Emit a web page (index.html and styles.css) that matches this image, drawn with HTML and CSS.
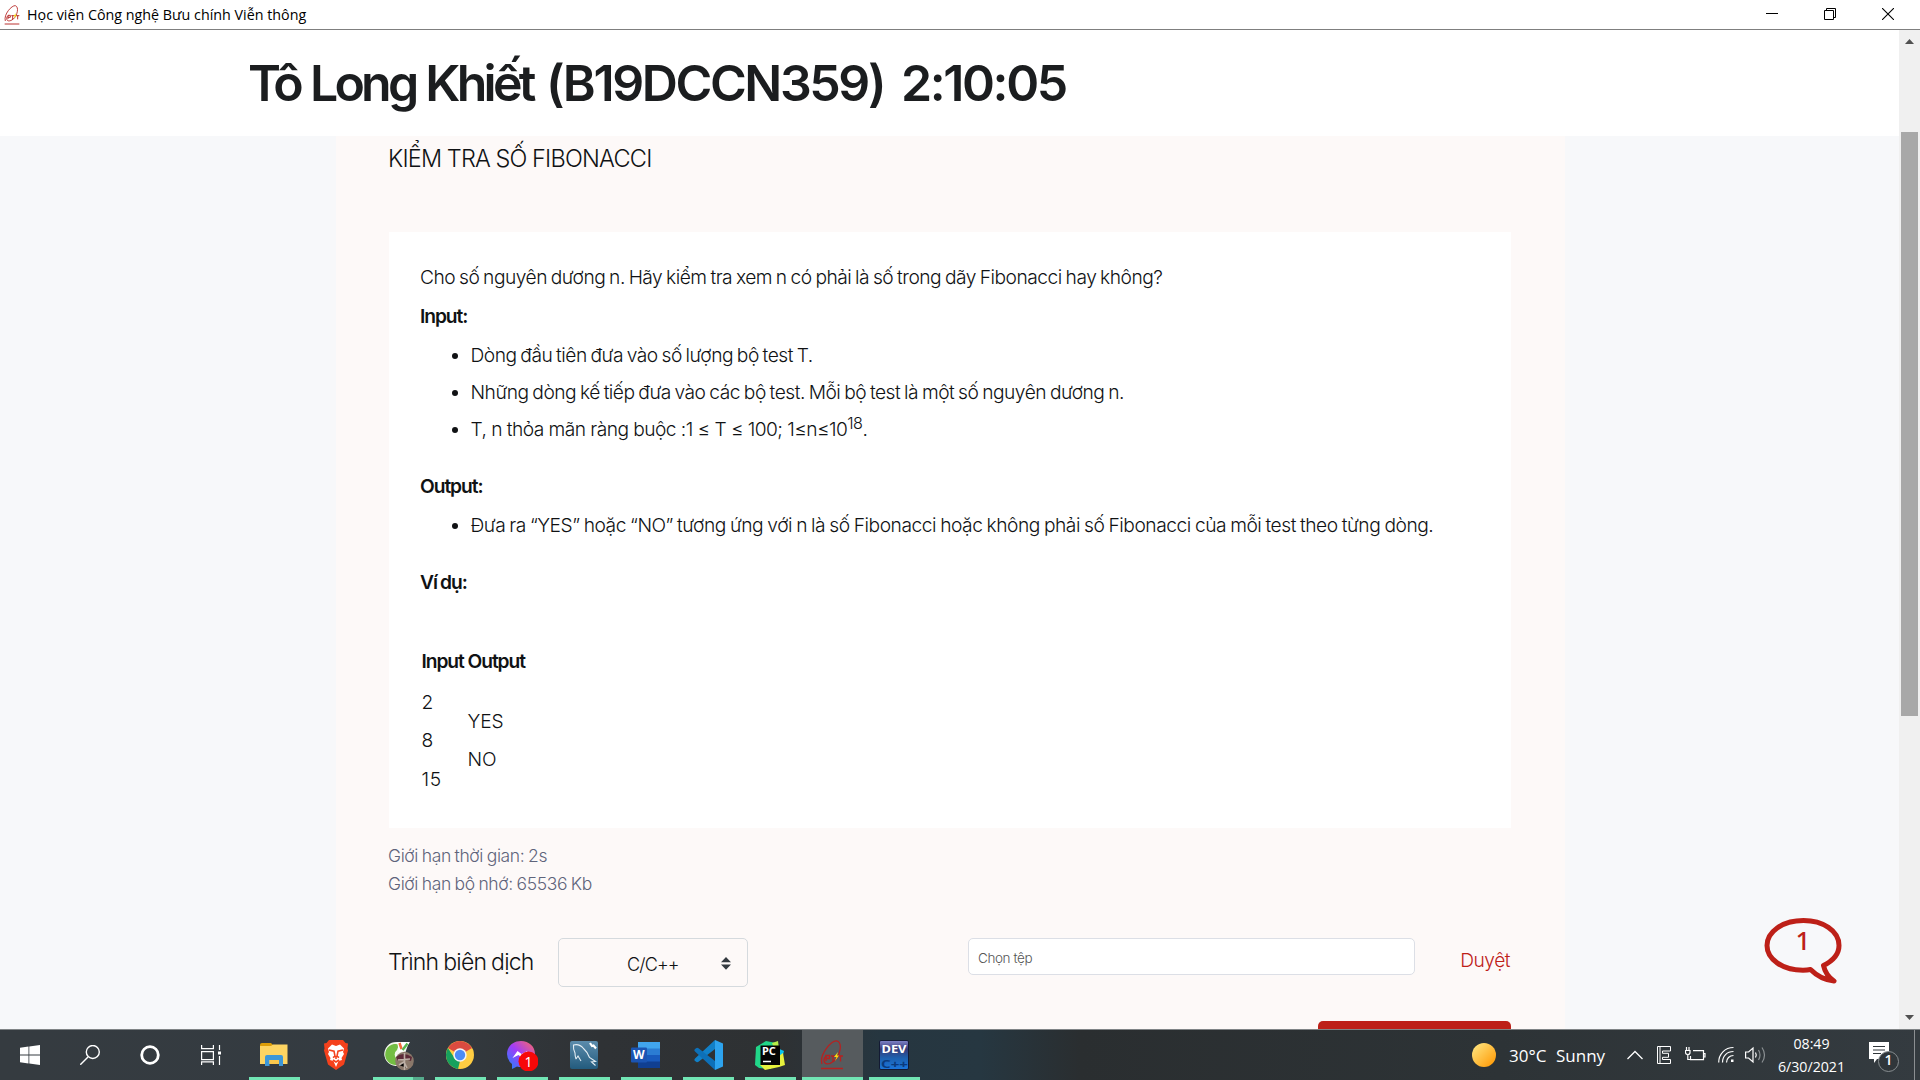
FILE: index.html
```html
<!DOCTYPE html>
<html lang="vi">
<head>
<meta charset="utf-8">
<title>Học viện Công nghệ Bưu chính Viễn thông</title>
<link rel="stylesheet" href="styles.css">
</head>
<body>
<div class="titlebar">
  <svg class="app-logo" width="16" height="24" viewBox="0 0 24 30"><use href="#ptit"/></svg>
  <span class="app-title">Học viện Công nghệ Bưu chính Viễn thông</span>
  <div class="window-controls">
    <svg width="12" height="12"><path d="M0 5.500h12" stroke="#000"/></svg>
    <svg width="12" height="12" fill="none" stroke="#000"><path d="M.5 2.500h9v9h-9zM2.500 2V.5h9v9H10"/></svg>
    <svg width="12" height="12"><path d="M0 0l12 12M12 0L0 12" stroke="#000" stroke-width="1.100"/></svg>
  </div>
</div>

<div class="viewport">
  <div class="page">
    <header class="header"><h1><span class="name">Tô Long Khiết</span><span class="code">(B19DCCN359)</span><span class="timer">2:10:05</span></h1></header>
    <main class="content">
      <h2 class="problem-title">KIỂM TRA SỐ FIBONACCI</h2>
      <section class="card">
        <p>Cho số nguyên dương n. Hãy kiểm tra xem n có phải là số trong dãy Fibonacci hay không?</p>
        <p class="label">Input:</p>
        <ul>
          <li>Dòng đầu tiên đưa vào số lượng bộ test T.</li>
          <li>Những dòng kế tiếp đưa vào các bộ test. Mỗi bộ test là một số nguyên dương n.</li>
          <li class="bounds">T, n thỏa mãn ràng buộc :1 ≤ T ≤ 100; 1≤n≤10<sup>18</sup>.</li>
        </ul>
        <p class="label">Output:</p>
        <ul>
          <li class="result">Đưa ra “YES” hoặc “NO” tương ứng với n là số Fibonacci hoặc không phải số Fibonacci của mỗi test theo từng dòng.</li>
        </ul>
        <p class="label">Ví dụ:</p>
        <div class="example">
          <b>Input</b><b>Output</b>
          <div>2<br>8<br>15</div>
          <div>YES<br>NO</div>
        </div>
      </section>
      <div class="limits">
        <div>Giới hạn thời gian: 2s</div>
        <div>Giới hạn bộ nhớ: 65536 Kb</div>
      </div>
      <div class="submit-row">
        <label>Trình biên dịch</label>
        <div class="select"><span>C/C++</span><svg width="10" height="13"><path d="M0 5.300L5 0l5 5.300zM0 7.500h10l-5 5.300z" fill="#343a40"/></svg></div>
        <div class="file">Chọn tệp</div>
        <a class="browse">Duyệt</a>
      </div>
      <div class="submit-button"></div>
    </main>
    <div class="chat">
      <svg width="80" height="70"><path d="M40.500 4.500C59.500 4.500 76 14.500 76 29.500c0 8.500-5.500 15-15.500 20 1.500 7 4.500 11.500 10.500 15.500C61 64 53.500 59.500 47.500 53.500c-3 .7-5.500.7-7.500.7C19 54 4 43 4 29.500S19 4.500 40.500 4.500z" fill="none" stroke="#bd2018" stroke-width="5" stroke-linejoin="round"/></svg>
      <span>1</span>
    </div>
  </div>
  <div class="scrollbar">
    <svg width="9" height="5"><path d="M0 5L4.500 0 9 5z" fill="#505050"/></svg>
    <div class="thumb"></div>
    <svg class="down" width="9" height="5"><path d="M0 0l4.500 5L9 0z" fill="#505050"/></svg>
  </div>
</div>

<footer class="taskbar">
  <div class="system">
    <svg width="20" height="20"><path d="M0 2.800L8.500 1.600v8H0zM9.300 1.400L20 0v9.600H9.300zM0 10.400h8.500v8L0 17.200zM9.300 10.400H20V20L9.300 18.600z" fill="#fff"/></svg>
    <svg width="20" height="20" fill="none" stroke="#fff" stroke-width="1.400"><circle cx="12.800" cy="7" r="6.500"/><path d="M8 12L.3 19.700"/></svg>
    <svg width="20" height="20"><circle cx="10" cy="10" r="8.300" fill="none" stroke="#fff" stroke-width="2.800"/></svg>
    <svg width="22" height="20" fill="none" stroke="#fff" stroke-width="1.200"><path d="M1.600 0v3.600h11.800V0M1.600 6.600h11.800v8H1.600zM1.600 20v-3.100h11.800V20M19.500 0v5M19.500 11v9"/><path fill="#fff" stroke="none" d="M18 6.500h3v3h-3z"/></svg>
  </div>
  <div class="apps">
    <div class="app open"><svg width="30" height="30"><path d="M1 5q0-2 2-2h9l2 2v8H1z" fill="#dc9d08"/><path d="M1 6h11l2-1.500h14.500V24H1z" fill="#fdd462"/><path d="M6 25V17q0-2 2-2h14q2 0 2 2v9h-4v-6h-9.500v6H6z" fill="#3d97d8"/><path d="M10.500 20H20v4h-9.500z" fill="#fbc84c"/></svg></div>
    <div class="app"><svg width="30" height="30"><path d="M8 0h14l2.500 3 2.500.5-.5 5 .5 2-4 14L15 30l-8-5.500-4-14 .5-2-.5-5L5.500 3z" fill="#f5411c"/><path d="M15 6l4-1.500 4 4-1 3.500 1 2-2.500 4 .5 2-3.500 1L15 27l-2.500-6-3.500-1 .5-2L7 14l1-2-1-3.500 4-4z" fill="#fff"/><path d="M8 10l5 1.200 1 5-2 1.500M22 10l-5 1.200-1 5 2 1.500M12 20l3 2 3-2M15 16v3" fill="none" stroke="#f5411c" stroke-width="1.600"/></svg></div>
    <div class="app open split"><svg width="32" height="32"><path d="M15 3A12 12 0 1 0 19 26L27 3z" fill="#f4f7ee"/><path d="M17 5.500A10.500 10.500 0 1 0 18 25L15 20A5.500 5.500 0 0 1 15 11z" fill="#73bd43"/><path d="M15 3h13l-6 9-5 1z" fill="#fff"/><path d="M17.500 4l2 6" stroke="#f26b3b" stroke-width="2.500"/><path d="M25.500 4.500l-5 6.500" stroke="#57b54c" stroke-width="2.500"/><circle cx="22.500" cy="22" r="9.300" fill="#8a786a"/><path d="M14 18q7-6 16 0l-1 4-6-2-7 2z" fill="#5c2a38"/><path d="M22.500 14v17M16 21l12-1M17 26l5-3 3 6" stroke="#bdb0a6" stroke-width="1.600"/></svg></div>
    <div class="app open"><svg width="30" height="30"><circle cx="15" cy="15" r="14" fill="#ffcd42"/><path d="M15 15L2.900 8A14 14 0 0 1 27.100 8z" fill="#da4b40"/><path d="M2.900 8l6.600 10 5.500 3-2 7.900A14 14 0 0 1 2.900 8z" fill="#17a15d"/><circle cx="15" cy="15" r="6.700" fill="#f4f4f4"/><circle cx="15" cy="15" r="5.200" fill="#4c8bf5"/></svg></div>
    <div class="app open"><svg width="32" height="32"><defs><linearGradient id="ms" x1="0" y1="1" x2="1" y2="0"><stop offset="0" stop-color="#168aff"/><stop offset=".5" stop-color="#a13cf8"/><stop offset="1" stop-color="#ff6c60"/></linearGradient></defs><path d="M15 2C7 2 1 7.500 1 15q0 6 5 10v5l5-2.500q2 .5 4 .5c8 0 14-5.500 14-13S23 2 15 2z" fill="url(#ms)"/><path d="M6.500 19l5-7 4 3 6-3-5 7-4-3z" fill="#fff"/><circle cx="22.500" cy="22.500" r="10" fill="#f70808"/></svg><span class="badge">1</span></div>
    <div class="app open"><svg width="30" height="30"><defs><linearGradient id="my" x2="0" y2="1"><stop stop-color="#5c8cac"/><stop offset="1" stop-color="#235b7d"/></linearGradient></defs><rect x="1" y="1" width="28" height="28" rx="2" fill="url(#my)"/><path d="M7 19q-1-3-1-6-2-4-1.500-8 6-1.500 10 3.500 4 3.500 6 9l6 4-4 .5 4 3.500M7 19l2-3 3 5" fill="none" stroke="#e3edf3" stroke-width="1.100"/><path d="M21 3l2 3 1.500-.5 2.500 3" fill="none" stroke="#fff" stroke-width="2.200"/></svg></div>
    <div class="app open"><svg width="30" height="30"><path d="M7 2h22v7H7z" fill="#41a5ee"/><path d="M7 8.500h22v7H7z" fill="#2b7cd3"/><path d="M7 15h22v7H7z" fill="#185abd"/><path d="M7 21.500h22V28H7z" fill="#103f91"/><rect y="7.500" width="16" height="15" rx="1" fill="#1b55b3"/><text x="2" y="19" class="glyph" font-size="12">W</text></svg></div>
    <div class="app open"><svg width="30" height="30"><path d="M22 0l-20 18.500q-1.500 1.500 0 2.500l1.500 1q1 .5 2-.3L22 9z" fill="#1180c8"/><path d="M22 30L2 11.500Q.5 10 2 9l1.500-1q1-.5 2 .3L22 21z" fill="#0d70b8"/><path d="M22 0l8 3.500v23L22 30z" fill="#2da3ee"/></svg></div>
    <div class="app open"><svg width="30" height="30"><path d="M1 7L11 1l10 2-5 26-12-1L0 25z" fill="#21d789"/><path d="M17 3l6-2 1 8-4 2z" fill="#b8ef48"/><path d="M20 7l9 4-2 7z" fill="#07c3f2"/><path d="M24 16l4-3 2 12-6 2-14 3-5-5z" fill="#e8f23d"/><rect x="5.500" y="5.500" width="19.500" height="19.500" fill="#050505"/><path d="M8 21.500h8" stroke="#fff" stroke-width="1.500"/><text x="7" y="15" class="glyph" font-size="11">PC</text></svg></div>
    <div class="app open active"><svg width="24" height="30" viewBox="0 0 24 30"><g id="ptit"><path d="M2 24C-1 14 12 0 17 1c6 2 3 15-3 20-5 4-10 4-10-1 0-2 1-3 2-4" fill="none" stroke="#b52221" stroke-width="1.300"/><path d="M6 21v-5.500h3.500v3H6M11 16h5M13 16v6M17 16h6M20.500 16v5.500M1 28.500h22" fill="none" stroke="#b52221" stroke-width="1.400"/><path d="M18 12l-4 5h2.500l-1.500 4 4-5.500h-2z" fill="#f4df16"/></g></svg></div>
    <div class="app open"><svg width="30" height="30"><defs><linearGradient id="dv" x2="0" y2="1"><stop stop-color="#8184ca"/><stop offset=".3" stop-color="#373a76"/><stop offset=".6" stop-color="#1d60ae"/><stop offset="1" stop-color="#1b76dd"/></linearGradient></defs><rect x=".5" y=".5" width="29" height="29" rx="1.500" fill="url(#dv)" stroke="#131a33"/><text x="2.500" y="12.500" class="glyph" font-size="11" textLength="25" lengthAdjust="spacingAndGlyphs">DEV</text><text x="2" y="27.500" class="glyph cpp" font-size="11" textLength="27" lengthAdjust="spacingAndGlyphs">C++</text></svg></div>
  </div>
  <div class="tray">
    <svg width="24" height="24"><defs><linearGradient id="sun" x2="1" y2="1"><stop offset=".1" stop-color="#ffe27a"/><stop offset=".9" stop-color="#ff9d0a"/></linearGradient></defs><circle cx="12" cy="12" r="12" fill="url(#sun)"/></svg>
    <span class="weather">30°C</span><span class="weather">Sunny</span>
    <svg width="16" height="10"><path d="M.5 9L8 1.500 15.500 9" fill="none" stroke="#fff" stroke-width="1.300"/></svg>
    <svg width="15" height="18" fill="none" stroke="#fff"><path d="M.5.5h13v4.500h-8v2.300h6v4h-6v2.200h8v4H.5zM3 .5v16.500" stroke-width="1"/></svg>
    <svg width="21" height="18" fill="none" stroke="#fff" stroke-width="1.200"><path d="M8 4.600h10.500v9H5.500V10M19 7.500h1v3.500h-1M1.500 1v3M4 1v3M.5 4.500h4.500v2q0 2-2.200 2t-2.300-2zM2.800 8.500v5h3"/></svg>
    <svg width="16" height="18" fill="none" stroke="#fff" stroke-width="1.200"><path d="M.7 16.500C.7 8 7 1.500 15.500 1.500M4.500 16.500c0-6.500 4.500-11 11-11M8.500 16.500c0-4 3-7 7-7" /><path d="M13 13.500h2.500V16H13z" fill="#fff" stroke="none"/></svg>
    <svg width="21" height="20" fill="none" stroke="#fff" stroke-width="1.200"><path d="M.6 7h3L8 3v14l-4.400-4h-3zM10.500 7.500q1.500 2.500 0 5"/><path d="M13.500 5q3 5 0 10M17 2.500q5 7.500 0 15" stroke="#8b9093"/></svg>
    <div class="clock">08:49<br>6/30/2021</div>
    <i></i>
    <div class="notify"><svg width="32" height="32"><path d="M0 1h20v17H8l-3 4v-4H0z" fill="#fff"/><path d="M4 5.500h12M4 9h12M4 12.500h8" stroke="#30363a" stroke-width="1.200"/><circle cx="19.500" cy="20.500" r="10" fill="#30363a" stroke="#888e91"/></svg><span>1</span></div>
  </div>
</footer>
</body>
</html>
```
FILE: styles.css
```css
* { box-sizing: border-box; }
body { margin: 0; width: 1920px; height: 1080px; overflow: hidden; display: flex; flex-direction: column; font-family: Inter, sans-serif; font-weight: 350; color: #101214; background: #fff; }
p, h1, h2, ul { margin: 0; padding: 0; font-weight: inherit; }
svg { display: block; flex: none; }

.titlebar { height: 30px; display: flex; align-items: center; padding-left: 4px; border-bottom: 1px solid #7f7f7f; flex: none; color: #000; }
.app-title { margin-left: 7px; padding-bottom: 1px; font: 14.300px "Open Sans", sans-serif; }
.window-controls { margin-left: auto; display: flex; gap: 46px; padding-right: 26px; padding-bottom: 1px; }

.viewport { height: 999px; display: flex; overflow: hidden; }
.page { width: 1899px; background: #f7f8fa; position: relative; }
.header { height: 106px; background: #fff; padding-left: 248px; }
.header h1 { font-size: 50px; font-weight: 600; color: #1b1d1f; line-height: 106px; letter-spacing: -2.400px; white-space: nowrap; display: flex; }
.name { width: 298px; letter-spacing: -3.750px; word-spacing: 1px; }
.code { width: 355px; letter-spacing: -2.400px; }
.content { width: 1229px; height: 893px; margin-left: 336px; padding: 0 54px 0 52px; background: #fdf9f8; }
.problem-title { font-size: 23.500px; line-height: 46px; height: 96px; letter-spacing: -0.750px; word-spacing: -0.600px; }

.card { height: 596px; margin-left: 1px; padding: 26px 32px 0 31px; background: #fff; font-size: 19.200px; letter-spacing: -0.490px; word-spacing: -1.100px; }
.card p { line-height: 39px; white-space: nowrap; }
.card .label, .example b { font-weight: 600; letter-spacing: -1.050px; word-spacing: -0.600px; }
.card ul { padding-left: 50.500px; line-height: 37px; padding-top: 1px; margin-bottom: 19px; white-space: nowrap; }
.card .bounds { word-spacing: 0; letter-spacing: -0.550px; }
.card .result { word-spacing: -0.800px; letter-spacing: -0.470px; }
.card sup { font-size: 84%; line-height: 0; vertical-align: baseline; position: relative; top: -.45em; }
.example { display: grid; grid-template-columns: 46px 100px; align-items: center; margin: 40px 0 0 1.500px; line-height: 38.500px; row-gap: 2px; }
.example div { letter-spacing: -0.100px; }
.example div:nth-child(3) { letter-spacing: 0.600px; }

.limits { margin-top: 14px; font-size: 17.500px; line-height: 28px; color: #5f647b; letter-spacing: -0.380px; word-spacing: -0.800px; }
.submit-row { display: flex; margin-top: 40px; height: 83px; align-items: flex-start; }
.submit-row label { width: 170px; font-size: 23px; line-height: 48px; letter-spacing: -0.780px; word-spacing: -0.800px; }
.select { width: 190px; height: 49px; border: 1px solid #d5dade; border-radius: 5px; display: flex; align-items: center; justify-content: space-between; padding: 3px 16px 0 68px; font-size: 18px; letter-spacing: -0.850px; }
.select svg { margin-bottom: 1px; }
.file { margin-left: 220px; width: 447px; height: 37px; border: 1px solid #dcdfe6; border-radius: 5px; background: #fff; padding-left: 9px; font-size: 13.500px; line-height: 39px; color: #555; letter-spacing: -0.400px; }
.browse { margin-left: auto; margin-right: 1px; color: #bd2018; font-size: 19.200px; line-height: 44px; letter-spacing: -0.500px; }
.submit-button { margin-left: auto; width: 193px; height: 50px; border-radius: 5px; background: #bd2018; }

.chat { position: absolute; left: 1763px; top: 886px; width: 80px; }
.chat span { position: absolute; left: 0; top: 9px; width: 80px; text-align: center; font: 500 26px/30px "Noto Sans", sans-serif; color: #bd2018; }
.scrollbar { width: 21px; background: #f0f0f0; display: flex; flex-direction: column; align-items: center; padding-top: 9px; }
.thumb { width: 17px; height: 584px; margin-top: 88px; background: #a8a8a8; }
.down { margin: auto 0 9px; }

.taskbar { height: 51px; border-top: 1px solid #808486; display: flex; flex: none; color: #fff; font-weight: 400; background: linear-gradient(90deg, #353b40 0, #343b41 400px, #2f3235 600px, #2e3133 780px, #263640 880px, #263741 980px, #2a2e30 1080px, #2d3336 1500px, #343b40 1920px); }
.system { display: flex; padding-left: 1px; }
.system svg { width: 60px; padding: 0 19px; height: 20px; margin-top: 15px; }
.apps { display: flex; margin-left: 2.500px; }
.app { width: 62px; height: 50px; display: flex; align-items: center; justify-content: center; position: relative; background-repeat: no-repeat; }
.app > svg { margin-left: -2px; }
.open { background-image: linear-gradient(#71e5b4, #71e5b4); background-size: 51px 3px; background-position: 5.500px 47px; }
.split { background-image: linear-gradient(90deg, #71e5b4 40px, #55ab8c 40px); }
.active { background: linear-gradient(#71e5b4, #71e5b4) 0 47px / 61px 3px no-repeat, linear-gradient(#565b5e, #565b5e) 0 0 / 61px 50px no-repeat; }
.badge { position: absolute; left: 31px; top: 21px; width: 12px; font: 14px/22px "Noto Sans", sans-serif; text-align: center; }
.glyph { font-family: "Noto Sans", sans-serif; font-weight: 700; fill: #fff; }
.cpp { fill: #0b3a7d; }
.tray { margin-left: auto; display: grid; grid-template-columns: 37px 47px 71px 30px 28px 33px 27px 30px 73px 21px 45px; align-items: center; border-right: 1px solid #8b8f92; margin-right: 5px; font-family: "Open Sans", sans-serif; height: 50px; }
.weather { font-size: 17px; line-height: 24px; padding-top: 1px; }
.clock { font-size: 14.200px; line-height: 23px; text-align: center; white-space: nowrap; padding-bottom: 1px; }
.notify { position: relative; padding-top: 4px; }
.notify span { position: absolute; left: 14px; top: 13px; width: 11px; font-size: 14px; line-height: 20px; text-align: center; font-weight: 600; }
```
